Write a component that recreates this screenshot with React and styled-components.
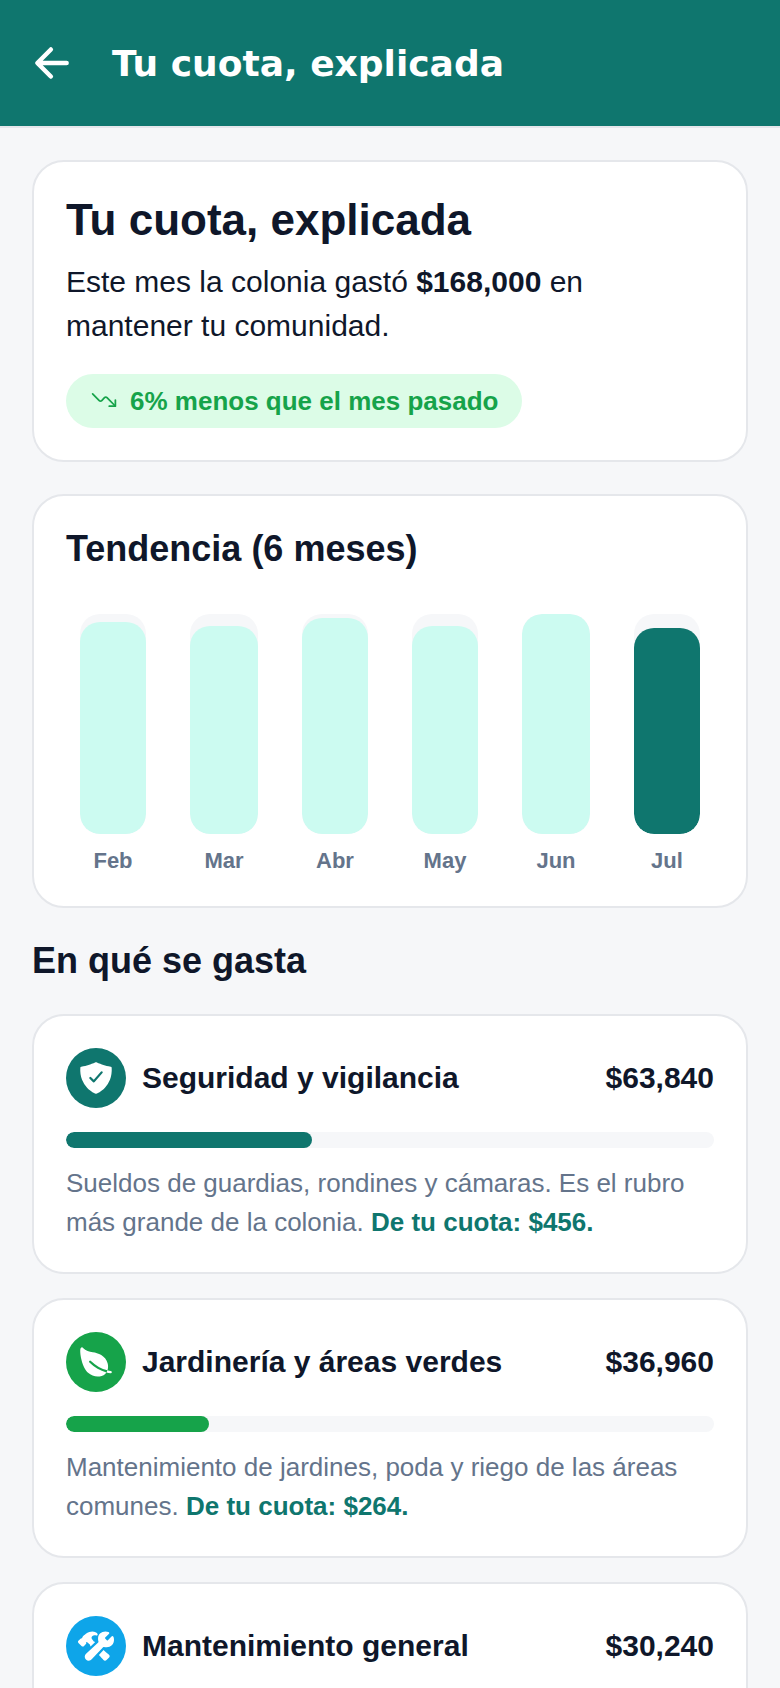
import React from "react";
import styled, { createGlobalStyle } from "styled-components";
import { IoArrowBack, IoTrendingDown, IoShieldCheckmark, IoLeaf, IoConstruct } from "react-icons/io5";

const Global = createGlobalStyle`
  html, body { margin: 0; padding: 0; background: #f6f7f9; height: 1688px; overflow: hidden; }
  body { font-family: "Liberation Sans", Arial, sans-serif; color: #0f172a; }
  #root { height: 1688px; overflow: hidden; }
`;

const Header = styled.header`
  display: flex;
  align-items: center;
  gap: 36px;
  height: 128px;
  box-sizing: border-box;
  padding: 0 32px 0 28px;
  background: #0f766e;
  border-bottom: 2px solid #e5e7eb;
  color: #fff;
`;
const HeaderTitle = styled.h1`
  margin: 0;
  font-family: "DejaVu Sans", sans-serif;
  font-size: 36px;
  font-weight: 700;
`;
const Main = styled.main`
  display: flex;
  flex-direction: column;
  padding: 32px;
`;
const Card = styled.section`
  background: #fff;
  border: 2px solid #e5e7eb;
  border-radius: 32px;
  padding: 32px;
  box-sizing: border-box;
`;
const HeroCard = styled(Card)`
  margin-bottom: 32px;
  height: 302px;
`;
const HeroTitle = styled.h2`
  margin: 0 0 14px;
  font-size: 44px;
  line-height: 52px;
  font-weight: 700;
`;
const HeroText = styled.p`
  margin: 0 0 26px;
  font-size: 30px;
  line-height: 44px;
`;
const Pill = styled.div`
  display: inline-flex;
  align-items: center;
  gap: 12px;
  height: 54px;
  padding: 0 24px;
  border-radius: 27px;
  background: #dcfce7;
  color: #16a34a;
  font-size: 26px;
  font-weight: 700;
`;
const PillIcon = styled(IoTrendingDown)`
  width: 28px;
  height: 28px;
  margin-bottom: 2px;
`;
const TrendCard = styled(Card)`
  height: 414px;
`;
const CardTitle = styled.h3`
  margin: 0;
  font-size: 36px;
  line-height: 42px;
  font-weight: 700;
`;
const Chart = styled.div`
  display: grid;
  grid-template-columns: 66px 68px 66px 66px 68px 66px;
  column-gap: 44px;
  padding: 0 14px;
  margin-top: 44px;
`;
const Col = styled.div`
  display: flex;
  flex-direction: column;
  align-items: stretch;
  gap: 13px;
`;
const Track = styled.div`
  display: flex;
  align-items: flex-end;
  height: 220px;
  border-radius: 20px;
  background: #f6f7f9;
  overflow: hidden;
`;
const Bar = styled.div`
  width: 100%;
  border-radius: 20px;
  background: ${(p) => (p.$active ? "#0f766e" : "#ccfbf1")};
`;
const Month = styled.span`
  text-align: center;
  font-size: 22px;
  line-height: 28px;
  font-weight: 700;
  color: #64748b;
  white-space: nowrap;
`;
const SectionTitle = styled.h2`
  margin: 31px 0 31px;
  font-size: 36px;
  line-height: 44px;
  font-weight: 700;
`;
const List = styled.div`
  display: flex;
  flex-direction: column;
  gap: 24px;
`;
const ExpenseCard = styled(Card)`
  height: 260px;
`;
const Top = styled.div`
  display: flex;
  align-items: center;
  gap: 16px;
`;
const Badge = styled.div`
  display: flex;
  align-items: center;
  justify-content: center;
  flex: none;
  width: 60px;
  height: 60px;
  border-radius: 50%;
  background: ${(p) => p.$color};
  color: #fff;
`;
const Name = styled.span`
  flex: 1;
  font-size: 30px;
  font-weight: 700;
`;
const Amount = styled.span`
  font-size: 30px;
  font-weight: 700;
`;
const Progress = styled.div`
  height: 16px;
  margin: 24px 0 16px;
  border-radius: 8px;
  background: #f6f7f9;
  overflow: hidden;
`;
const Fill = styled.div`
  height: 100%;
  border-radius: 8px;
  background: ${(p) => p.$color};
`;
const Desc = styled.p`
  margin: 0;
  font-size: 26px;
  line-height: 39px;
  color: #64748b;
`;
const Share = styled.strong`
  color: #0f766e;
`;

const bars = [
  { m: "Feb", h: 212 },
  { m: "Mar", h: 208 },
  { m: "Abr", h: 216 },
  { m: "May", h: 208 },
  { m: "Jun", h: 220 },
  { m: "Jul", h: 206, active: true },
];

const items = [
  { name: "Seguridad y vigilancia", amount: "$63,840", color: "#0f766e", pct: 38, icon: <IoShieldCheckmark size={36} />, text: "Sueldos de guardias, rondines y cámaras. Es el rubro más grande de la colonia.", share: "$456" },
  { name: "Jardinería y áreas verdes", amount: "$36,960", color: "#16a34a", pct: 22, icon: <IoLeaf size={36} />, text: "Mantenimiento de jardines, poda y riego de las áreas comunes.", share: "$264" },
  { name: "Mantenimiento general", amount: "$30,240", color: "#0ea5e9", pct: 18, icon: <IoConstruct size={36} />, text: "Reparaciones, pintura y limpieza de las áreas comunes.", share: "$216" },
];

export default function App() {
  return (
    <>
      <Global />
      <Header>
        <IoArrowBack size={48} />
        <HeaderTitle>Tu cuota, explicada</HeaderTitle>
      </Header>
      <Main>
        <HeroCard>
          <HeroTitle>Tu cuota, explicada</HeroTitle>
          <HeroText>
            Este mes la colonia gastó <strong>$168,000</strong> en mantener tu comunidad.
          </HeroText>
          <Pill>
            <PillIcon />
            6% menos que el mes pasado
          </Pill>
        </HeroCard>
        <TrendCard>
          <CardTitle>Tendencia (6 meses)</CardTitle>
          <Chart>
            {bars.map((b) => (
              <Col key={b.m}>
                <Track>
                  <Bar $active={b.active} style={{ height: b.h }} />
                </Track>
                <Month>{b.m}</Month>
              </Col>
            ))}
          </Chart>
        </TrendCard>
        <SectionTitle>En qué se gasta</SectionTitle>
        <List>
          {items.map((it) => (
            <ExpenseCard key={it.name}>
              <Top>
                <Badge $color={it.color}>{it.icon}</Badge>
                <Name>{it.name}</Name>
                <Amount>{it.amount}</Amount>
              </Top>
              <Progress>
                <Fill $color={it.color} style={{ width: `${it.pct}%` }} />
              </Progress>
              <Desc>
                {it.text} <Share>De tu cuota: {it.share}.</Share>
              </Desc>
            </ExpenseCard>
          ))}
        </List>
      </Main>
    </>
  );
}
